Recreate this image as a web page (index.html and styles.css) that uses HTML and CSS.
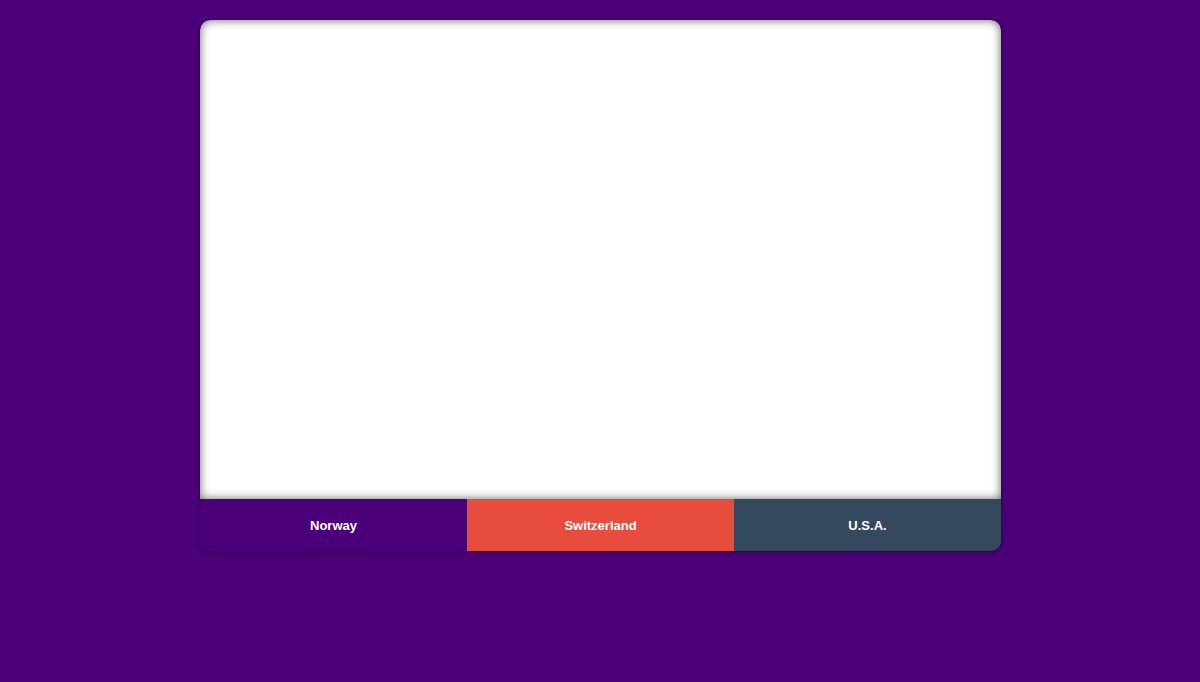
FILE: index.html
```html
<!DOCTYPE html>
<html>
<head>
<meta charset="utf-8">
<link rel="stylesheet" href="styles.css">
</head>
<body>
<div class="slider">
  <div class="stage"></div>
  <div class="tabs">
    <div class="tab tab-norway">Norway</div>
    <div class="tab tab-swiss">Switzerland</div>
    <div class="tab tab-usa">U.S.A.</div>
  </div>
</div>
</body>
</html>
```
FILE: styles.css
```css
html, body {
  margin: 0;
  padding: 0;
  background: #4b0079;
  height: 100%;
}
body {
  padding-top: 20px;
  box-sizing: border-box;
  font-family: "Liberation Sans", Arial, sans-serif;
}
.slider {
  width: 801px;
  margin: 0 auto 0 200px;
  border-radius: 10px;
  overflow: hidden;
  box-shadow: 0 1px 4px rgba(0,0,0,0.45);
}
.stage {
  height: 479px;
  background: #fff;
  border-radius: 10px 10px 0 0;
  box-shadow: inset 0 0 10px rgba(0,0,0,0.6);
}
.tabs {
  display: flex;
  height: 52px;
}
.tab {
  flex: 1;
  display: flex;
  align-items: center;
  justify-content: center;
  color: #fff;
  font-weight: 700;
  font-size: 13px;
}
.tab-norway { background: #4b0079; }
.tab-swiss { background: #e74c3c; }
.tab-usa { background: #34495e; }
```
